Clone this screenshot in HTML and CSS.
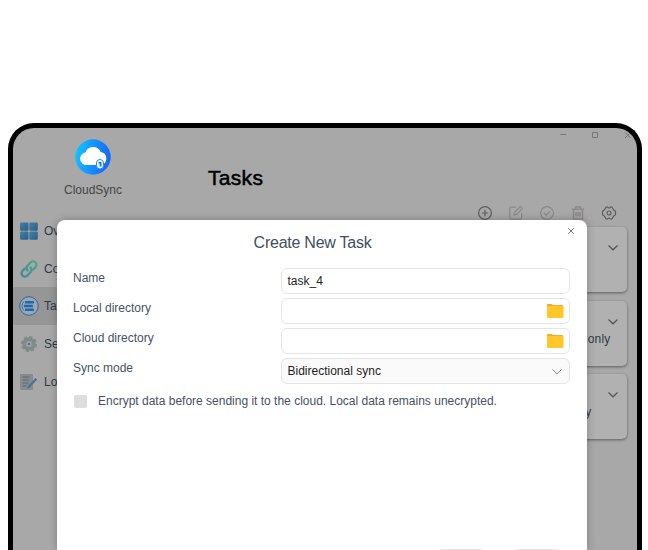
FILE: index.html
```html
<!DOCTYPE html>
<html lang="en">
<head>
<meta charset="utf-8">
<title>CloudSync</title>
<link rel="stylesheet" href="styles.css">
</head>
<body>
<div class="window">
  <aside class="sidebar">
    <div class="brand">
      <svg class="logo" width="36" height="36" viewBox="0 0 36 36">
        <defs><linearGradient id="lg" x1="0" y1=".4" x2="1" y2=".6"><stop offset="0" stop-color="#10c4ff"/><stop offset=".5" stop-color="#168fff"/><stop offset="1" stop-color="#1664f4"/></linearGradient></defs>
        <circle cx="18" cy="18" r="17.7" fill="url(#lg)"/>
        <path d="M11.500 26a6.300 6.300 0 0 1-1.200-12.500 8.300 8.300 0 0 1 15.400-.5A6.600 6.600 0 0 1 26 26z" fill="#fff"/>
        <rect x="21.500" y="20.500" width="7" height="9.500" rx="3.500" fill="#fff" stroke="#1687ff" stroke-width="1"/>
        <path d="M23.300 23.300q1.700-1.200 3.300 0v4.200h-2v-3h-1.300z" fill="#1676ee"/>
      </svg>
      <span class="brand-name">CloudSync</span>
    </div>
    <nav class="nav">
      <div class="nav-item">
        <svg width="20" height="20" viewBox="0 0 20 20"><defs><linearGradient id="ov" x1="0" y1="0" x2="1" y2="1"><stop offset="0" stop-color="#417f9f"/><stop offset="1" stop-color="#23598d"/></linearGradient></defs><g fill="url(#ov)"><rect x="1" y="1.500" width="8.500" height="8.300" rx="1.200"/><rect x="10.300" y="1.500" width="8.500" height="8.300" rx="1.200"/><rect x="1" y="10.500" width="8.500" height="8.300" rx="1.200"/><rect x="10.300" y="10.500" width="8.500" height="8.300" rx="1.200"/></g></svg>
        <span>Ov</span>
      </div>
      <div class="nav-item">
        <svg width="20" height="20" viewBox="0 0 20 20"><defs><linearGradient id="ch" gradientUnits="userSpaceOnUse" x1="2" y1="16" x2="18" y2="2"><stop offset="0" stop-color="#3c84a0"/><stop offset="1" stop-color="#4bab80"/></linearGradient></defs><g fill="none" stroke="url(#ch)" stroke-width="2.300" stroke-linecap="round"><path d="M8.500 11.500a3.500 3.500 0 0 1 0-4.800l3-3.300a3.400 3.400 0 0 1 5 4.700l-2 2.200"/><path d="M11.500 8.500a3.500 3.500 0 0 1 0 4.800l-3 3.300a3.400 3.400 0 0 1-5-4.700l2-2.200"/></g></svg>
        <span>Co</span>
      </div>
      <div class="nav-item active">
        <svg width="20" height="20" viewBox="0 0 20 20"><circle cx="10" cy="10" r="9.300" fill="#9ea7ad" stroke="#2861ac" stroke-width="1"/><g fill="#1465bd"><rect x="6" y="4.900" width="9" height="2.500" rx=".6"/><rect x="5" y="8.700" width="9" height="2.500" rx=".6"/><rect x="6" y="12.500" width="9" height="2.500" rx=".6"/></g><path d="M4.800 5.500q-3.500 4.500 0 9" fill="none" stroke="#207ec0"/></svg>
        <span>Ta</span>
      </div>
      <div class="nav-item">
        <svg width="20" height="20" viewBox="0 0 20 20"><circle cx="10" cy="10" r="7" fill="none" stroke="#858c8c" stroke-width="2.300" stroke-dasharray="3.300 2.198"/><circle cx="10" cy="10" r="5" fill="none" stroke="#7f8788" stroke-width="3.500"/><circle cx="10" cy="10" r="3" fill="#a2a7a8" stroke="#8b9599" stroke-width="1"/><circle cx="10" cy="10" r="1.300" fill="#5d7080"/></svg>
        <span>Se</span>
      </div>
      <div class="nav-item">
        <svg width="20" height="20" viewBox="0 0 20 20"><path d="M1 2h13v16H3q-2 0-2-2z" fill="#858b8d"/><path d="M3.500 5h7M3.500 8h6M3.500 11h6M3.500 14h4" stroke="#5c656b" stroke-width="1"/><path d="M8 17l1-3 7.500-8 1.700 1.600-7.500 8z" fill="#426f9f"/></svg>
        <span>Lo</span>
      </div>
    </nav>
  </aside>
  <main class="main">
    <div class="caption">
      <svg width="9" height="9" viewBox="0 0 9 9"><path d="M1.500 4.500h6"/></svg>
      <svg width="9" height="9" viewBox="0 0 9 9"><path d="M1.500 2.500h5v5h-5z"/></svg>
      <svg width="9" height="9" viewBox="0 0 9 9"><path d="M2 2.500l5.500 5.500M7.500 2.500L2 8"/></svg>
    </div>
    <h1>Tasks</h1>
    <div class="toolbar">
      <svg width="16" height="16" viewBox="0 0 16 16"><circle cx="8" cy="8" r="6.400"/><path d="M8 4.800v6.400M4.800 8h6.400"/></svg>
      <svg class="off" width="16" height="16" viewBox="0 0 16 16"><path d="M8 2.200H3q-1.300 0-1.300 1.300v9.300q0 1.300 1.300 1.300h9.300q1.300 0 1.300-1.300V8M6 10l.5-2.800 5.800-5.500q1.800-.1 2 2L8.700 9.400z"/></svg>
      <svg class="off" width="16" height="16" viewBox="0 0 16 16"><circle cx="8" cy="8" r="6.400"/><path d="M5 8l2.200 2.200L11 6.300"/></svg>
      <svg class="off" width="16" height="16" viewBox="0 0 16 16"><path stroke-width="1.500" d="M1.800 4.300h12.400M5.500 4V2h5v2M3.500 4.500V14h9V4.500M6 7v4.500M8 7v4.500M10 7v4.500"/></svg>
      <svg width="16" height="16" viewBox="0 0 16 16"><path d="M5 2.200q1.200-.7 1.900.2 1.100.8 2.200 0 .8-.9 1.900-.2l1.200 2q.2 1.200 1.500 1.500.8.200.8 1v2.600q0 .8-.8 1-1.300.3-1.500 1.500l-1.200 2q-1.100.7-1.900-.2-1.100-.8-2.200 0-.7.900-1.900.2l-1.200-2q-.2-1.200-1.500-1.500-.8-.2-.8-1V6.700q0-.8.800-1 1.300-.3 1.500-1.500z"/><circle cx="8" cy="8" r="2"/></svg>
    </div>
    <section class="cards">
      <article class="card"><svg width="12" height="8" viewBox="0 0 12 8"><path d="M1.500 1.500L6 5.800l4.500-4.300"/></svg></article>
      <article class="card"><svg width="12" height="8" viewBox="0 0 12 8"><path d="M1.500 1.500L6 5.800l4.500-4.300"/></svg><span>only</span></article>
      <article class="card third"><svg width="12" height="8" viewBox="0 0 12 8"><path d="M1.500 1.500L6 5.800l4.500-4.300"/></svg><span>y</span></article>
    </section>
  </main>
  <div class="dialog">
    <svg class="close" width="8" height="8" viewBox="0 0 8 8"><path d="M1.200 1.200l5.600 5.600M6.800 1.200L1.200 6.800"/></svg>
    <h2>Create New Task</h2>
    <div class="form">
      <label class="row"><span>Name</span><div class="field"><b>task_4</b></div></label>
      <label class="row"><span>Local directory</span><div class="field"><svg class="folder" width="18" height="16" viewBox="0 0 18 16"><path d="M1 2q0-1 1-1h3.500l1 1H16q1.200 0 1.200 1.200V6H1z" fill="#ffa526"/><rect x="1" y="3" width="16.500" height="12" rx="1" fill="#ffc727"/></svg></div></label>
      <label class="row"><span>Cloud directory</span><div class="field"><svg class="folder" width="18" height="16" viewBox="0 0 18 16"><path d="M1 2q0-1 1-1h3.500l1 1H16q1.200 0 1.200 1.200V6H1z" fill="#ffa526"/><rect x="1" y="3" width="16.500" height="12" rx="1" fill="#ffc727"/></svg></div></label>
      <label class="row"><span>Sync mode</span><div class="field select"><b>Bidirectional sync</b><svg class="chev" width="12" height="8" viewBox="0 0 12 8"><path d="M1.500 2.500L6 6.800l4.500-4.300"/></svg></div></label>
    </div>
    <div class="check"><i></i><span>Encrypt data before sending it to the cloud. Local data remains unecrypted.</span></div>
    <div class="actions"><button></button><button></button></div>
  </div>
</div>
</body>
</html>
```
FILE: styles.css
```css
* { box-sizing: border-box; }
html, body { height: 100%; }
body {
  margin: 0;
  padding: 123px 6px 0 8px;
  overflow: hidden;
  background: #fff;
  font-family: "Liberation Sans", Arial, sans-serif;
  font-size: 12px;
}
.window {
  position: relative;
  display: flex;
  height: 427px;
  border: 5px solid #000;
  border-bottom: 0;
  border-radius: 26px 26px 0 0;
  background: #a8a8a8;
  overflow: hidden;
}
svg { display: block; flex: none; }
.sidebar { width: 160px; flex: none; }
.brand {
  display: flex;
  flex-direction: column;
  align-items: center;
  height: 84px;
  padding-top: 11px;
}
.brand-name {
  margin-top: 8px;
  line-height: 14px;
  color: #454545;
}
.nav-item {
  display: flex;
  align-items: center;
  gap: 5px;
  height: 37.700px;
  padding-left: 6px;
  color: #2d3a48;
}
.nav-item svg { opacity: .95; }
.nav-item.active { background: #969696; }
.main { flex: 1; display: flex; flex-direction: column; }
.caption {
  display: flex;
  justify-content: flex-end;
  gap: 23px;
  height: 38px;
  padding: 2px 5px 0 0;
}
.caption svg { fill: none; stroke: #777; stroke-width: 1; }
h1 {
  margin: 0 0 0 35px;
  font-size: 21px;
  line-height: 24px;
  font-weight: 400;
  color: #000;
  -webkit-text-stroke: .5px #000;
  letter-spacing: .3px;
}
.toolbar {
  display: flex;
  justify-content: flex-end;
  gap: 15px;
  padding: 14.500px 20.500px 0 0;
  height: 37px;
}
.toolbar svg { fill: none; stroke: #5e5e5e; stroke-width: 1.200; }
.toolbar svg.off { stroke: #8c8a88; }
.cards { display: flex; flex-direction: column; gap: 8.700px; padding-right: 10.500px; }
.card {
  display: flex;
  flex-direction: column;
  align-items: flex-end;
  height: 65px;
  padding: 17px 8px 0 0;
  border-radius: 5px;
  background: #b1b1b1;
  box-shadow: 0 1px 3px rgba(0,0,0,.45);
}
.card svg { fill: none; stroke: #555; stroke-width: 1.200; }
.card span { margin: 6px 8px 0 0; line-height: 14px; color: #2f3a45; letter-spacing: .2px; }
.card.third span { margin-right: 27px; }
.dialog {
  position: absolute;
  left: 44px;
  top: 92px;
  width: 530px;
  height: 330px;
  padding: 0 16px;
  border-radius: 8px 8px 0 0;
  background: #fff;
  box-shadow: 0 0 9px rgba(0,0,0,.25);
  color: #445364;
  overflow: hidden;
}
.close { margin: 7px -4px 0 auto; fill: none; stroke: #777; stroke-width: 1; }
h2 {
  margin: -1px 0 16px;
  padding-right: 19px;
  text-align: center;
  font-size: 16px;
  line-height: 18px;
  font-weight: 400;
  color: #405062;
  letter-spacing: -.25px;
}
.form { display: flex; flex-direction: column; gap: 4px; }
.row { display: flex; height: 26px; }
.row > span { width: 207.500px; line-height: 20px; }
.field {
  display: flex;
  align-items: center;
  justify-content: space-between;
  width: 289px;
  height: 26px;
  padding: 0 5px 0 6px;
  border: 1px solid #e5e5e5;
  border-radius: 6px;
}
.field b { font-weight: 400; color: #1d1d1d; }
.folder { margin-left: auto; }
.select { background: #fafafa; }
.chev { margin-right: 1px; fill: none; stroke: #858585; stroke-width: 1; }
.check { display: flex; align-items: center; height: 16px; margin-top: 9px; }
.check i { width: 13px; height: 13px; margin: 0 11.500px 0 .5px; border-radius: 2px; background: #dedddd; }
.check span { white-space: nowrap; }
.actions { display: flex; justify-content: flex-end; gap: 26px; height: 1px; margin-top: 139.500px; padding-right: 9px; }
.actions button { width: 50px; height: 26px; border: 1px solid #e8e8e8; border-radius: 6px; background: #fafafa; }
```
